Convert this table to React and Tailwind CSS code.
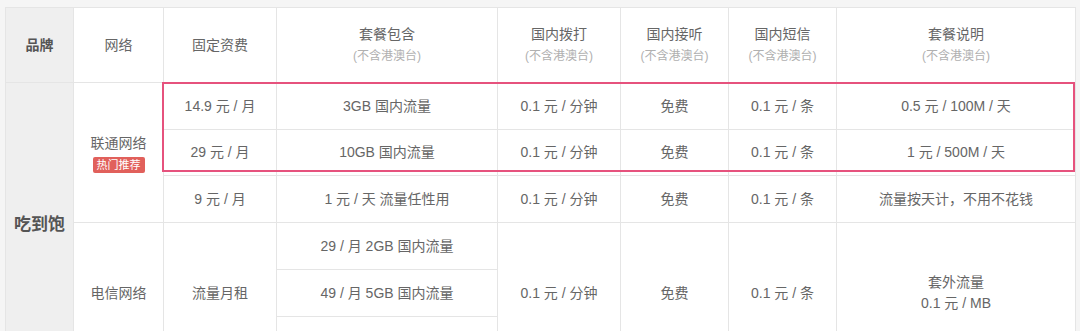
const headers = [
  { title: "网络" },
  { title: "固定资费" },
  { title: "套餐包含", sub: true },
  { title: "国内拨打", sub: true },
  { title: "国内接听", sub: true },
  { title: "国内短信", sub: true },
  { title: "套餐说明", sub: true },
];

const unicomRows = [
  ["14.9 元 / 月", "3GB 国内流量", "0.1 元 / 分钟", "免费", "0.1 元 / 条", "0.5 元 / 100M / 天"],
  ["29 元 / 月", "10GB 国内流量", "0.1 元 / 分钟", "免费", "0.1 元 / 条", "1 元 / 500M / 天"],
  ["9 元 / 月", "1 元 / 天 流量任性用", "0.1 元 / 分钟", "免费", "0.1 元 / 条", "流量按天计，不用不花钱"],
];

// 第三档在截图外，留空
const telecomPlans = ["29 / 月 2GB 国内流量", "49 / 月 5GB 国内流量", ""];

const cell = "border border-[#e5e5e5] text-center align-middle";

export default function App() {
  return (
    <div className="min-h-screen bg-[#f5f5f5] pt-[7px] px-[5px] font-['Liberation_Sans','Noto_Sans_CJK_SC',sans-serif] text-[14px] text-[#666]">
      <div className="relative">
        <table className="w-[1070px] table-fixed border-collapse bg-white">
          <colgroup>
            <col className="w-[68px]" />
            <col className="w-[90px]" />
            <col className="w-[113px]" />
            <col className="w-[221px]" />
            <col className="w-[123px]" />
            <col className="w-[108px]" />
            <col className="w-[108px]" />
            <col className="w-[239px]" />
          </colgroup>
          <thead>
            <tr>
              <th className={`${cell} h-[75px] bg-[#efefef] font-bold text-[#555]`}>品牌</th>
              {headers.map((h) => (
                <th key={h.title} className={`${cell} font-normal leading-[22px]`}>
                  <div>{h.title}</div>
                  {h.sub && <div className="text-[12px] text-[#b0b0b0]">(不含港澳台)</div>}
                </th>
              ))}
            </tr>
          </thead>
          <tbody>
            {unicomRows.map((row, i) => (
              <tr key={i} className={i === 1 ? "h-[46px]" : "h-[47px]"}>
                {i === 0 && (
                  <td rowSpan={6} className={`${cell} bg-[#efefef] pt-[3px] text-[17px] font-bold text-[#555]`}>
                    吃到饱
                  </td>
                )}
                {i === 0 && (
                  <td rowSpan={3} className={cell}>
                    <div className="flex flex-col items-center gap-[3px]">
                      <span>联通网络</span>
                      <span className="rounded-[2px] bg-[#e1605b] px-[4px] text-[11px] leading-[16px] text-white">
                        热门推荐
                      </span>
                    </div>
                  </td>
                )}
                {row.map((v, j) => (
                  <td key={j} className={cell}>
                    {v}
                  </td>
                ))}
              </tr>
            ))}
            {telecomPlans.map((plan, i) => (
              <tr key={i} className="h-[47px]">
                {i === 0 && (
                  <>
                    <td rowSpan={3} className={cell}>电信网络</td>
                    <td rowSpan={3} className={cell}>流量月租</td>
                  </>
                )}
                <td className={cell}>{plan}</td>
                {i === 0 && (
                  <>
                    <td rowSpan={3} className={cell}>0.1 元 / 分钟</td>
                    <td rowSpan={3} className={cell}>免费</td>
                    <td rowSpan={3} className={cell}>0.1 元 / 条</td>
                    <td rowSpan={3} className={`${cell} leading-[21px]`}>
                      <div>套外流量</div>
                      <div>0.1 元 / MB</div>
                    </td>
                  </>
                )}
              </tr>
            ))}
          </tbody>
        </table>
        {/* 推荐套餐高亮框 */}
        <div className="pointer-events-none absolute left-[157px] top-[75px] h-[90px] w-[913px] border-2 border-[#e6527d]" />
      </div>
    </div>
  );
}
